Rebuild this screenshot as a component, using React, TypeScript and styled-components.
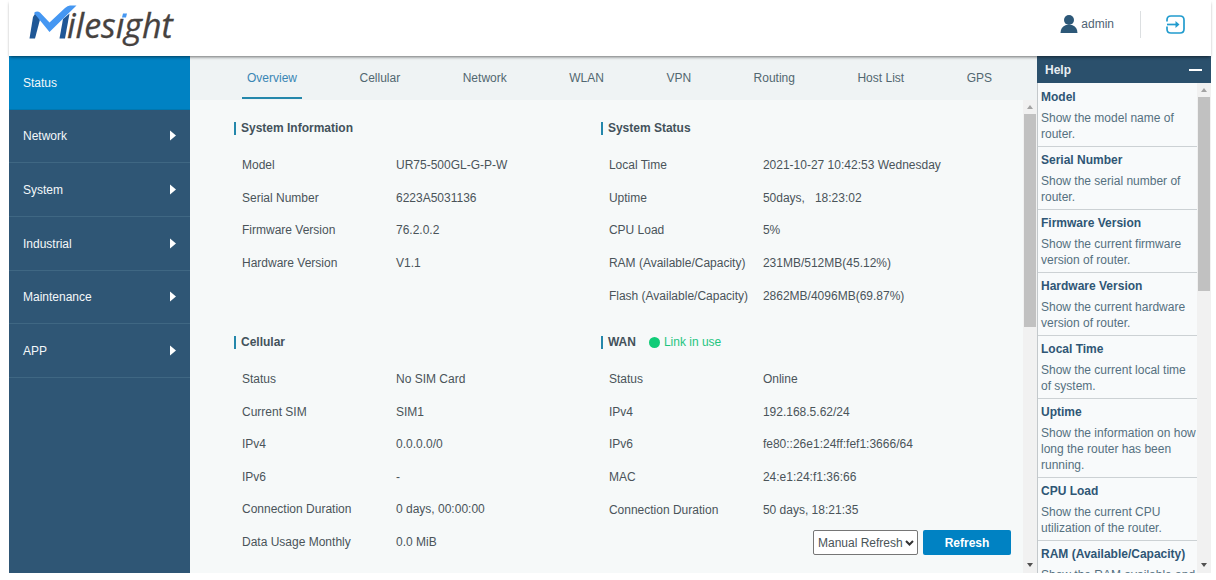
import React from "react";
import styled, { createGlobalStyle } from "styled-components";

const GlobalStyle = createGlobalStyle`
  * { box-sizing: border-box; }
  body {
    margin: 0;
    background: #fff;
    color: #4a5459;
    font: 12px/16px "Liberation Sans", Arial, sans-serif;
  }
  h2, h3, p, dl, dd, ul { margin: 0; padding: 0; }
  ul { list-style: none; }
  a { color: inherit; text-decoration: none; }
`;

const Page = styled.div`
  height: 100vh;
  min-height: 480px;
  display: flex;
  flex-direction: column;
  padding: 0 5px 7px 9px;
`;

const Header = styled.header`
  position: relative;
  z-index: 1;
  flex: none;
  height: 56px;
  display: flex;
  align-items: center;
  justify-content: space-between;
  padding: 0 26px 8px 19px;
  background: #fff;
  box-shadow: 0 2px 3px -1px rgba(0, 0, 0, 0.55);
`;

const Logo = styled.svg`
  display: block;
  width: 150px;
  height: 48px;
`;

const Account = styled.div`
  display: flex;
  align-items: center;
`;

const User = styled.a`
  display: flex;
  align-items: center;
  gap: 3px;
  color: #4f6373;
`;

const Divider = styled.span`
  width: 1px;
  height: 27px;
  margin: 0 25px 0 26px;
  background: #dcdfe1;
`;

const IconButton = styled.button`
  display: flex;
  padding: 0;
  border: 0;
  background: none;
  cursor: pointer;
`;

const Body = styled.div`
  flex: 1;
  min-height: 0;
  display: flex;
`;

const Sidebar = styled.nav`
  flex: none;
  width: 181px;
  background: #2f5675;
`;

const Menu = styled.ul`
  display: grid;
  grid-auto-rows: 1fr;
  height: 322px;
`;

const MenuLink = styled.a<{ $active?: boolean }>`
  height: 100%;
  display: flex;
  align-items: center;
  justify-content: space-between;
  padding: 1px 13px 0 14px;
  border-bottom: 1px solid ${(p) => (p.$active ? "#0077b0" : "#3f6783")};
  background: ${(p) => (p.$active ? "#0082c3" : "transparent")};
  color: #f4f8fa;
`;

const Main = styled.main`
  flex: 1;
  min-width: 0;
  display: flex;
  flex-direction: column;
  background: #f6f9f9;
`;

const Tabs = styled.nav`
  flex: none;
  height: 44px;
  display: flex;
  justify-content: space-between;
  padding: 0 40px 0 52px;
  background: #eff3f4;
`;

const Tab = styled.a<{ $active?: boolean }>`
  height: 43px;
  padding: 14px 5px 0;
  border-bottom: 2px solid ${(p) => (p.$active ? "#2487ab" : "transparent")};
  color: ${(p) => (p.$active ? "#3a86b4" : "#526770")};
  white-space: nowrap;
`;

const ScrollArea = styled.div`
  flex: 1;
  min-height: 0;
  display: flex;
`;

const Content = styled.div`
  flex: 1;
  min-width: 0;
  overflow: hidden;
  display: grid;
  grid-template-columns: 17fr 19fr;
  align-content: start;
  row-gap: 20px;
  padding: 18px 12px 0 44px;
`;

const SectionTitle = styled.h2`
  height: 20px;
  display: flex;
  align-items: center;
  margin-bottom: 11px;
  font-size: 12px;
  color: #43525b;

  &::before {
    content: "";
    width: 2px;
    height: 13px;
    margin-right: 5px;
    background: #2487ab;
  }
`;

const LinkState = styled.span`
  display: flex;
  align-items: center;
  gap: 4px;
  margin-left: 13px;
  font-weight: normal;
  color: #1fc57f;

  &::before {
    content: "";
    width: 11px;
    height: 11px;
    border-radius: 50%;
    background: #10cc78;
  }
`;

const Facts = styled.dl<{ $height: number }>`
  height: ${(p) => p.$height}px;
  display: grid;
  grid-auto-rows: 1fr;
  padding-left: 8px;
`;

const Fact = styled.div`
  display: grid;
  grid-template-columns: 154px 1fr;
  align-items: center;
  white-space: pre;
`;

const Actions = styled.div`
  display: flex;
  justify-content: flex-end;
  gap: 5px;
  margin-top: 4px;
`;

const SelectBox = styled.div`
  display: grid;
  grid-template-columns: 105px;
  align-items: center;

  > * { grid-area: 1 / 1; }

  svg {
    justify-self: end;
    margin-right: 4px;
    pointer-events: none;
  }
`;

const Select = styled.select`
  appearance: none;
  height: 25px;
  padding: 0 0 0 4px;
  border: 1px solid #767676;
  border-radius: 2px;
  background: #fff;
  color: #4a5459;
  font: inherit;
`;

const PrimaryButton = styled.button`
  width: 88px;
  height: 25px;
  padding: 0;
  border: 0;
  border-radius: 2px;
  background: #0082c3;
  color: #fff;
  font: inherit;
  font-weight: bold;
`;

const Help = styled.aside`
  flex: none;
  width: 174px;
  display: flex;
  flex-direction: column;
`;

const HelpHeader = styled.div`
  flex: none;
  height: 27px;
  display: flex;
  align-items: center;
  justify-content: space-between;
  padding: 0 9px 0 8px;
  background: #2b506c;
  color: #e8eef2;

  h2 { font-size: 12px; }
`;

const HelpBody = styled(ScrollArea)`
  border-left: 1px solid #c3c8cb;
  background: #f8fafb;
`;

const HelpList = styled.div`
  flex: 1;
  min-width: 0;
  overflow: hidden;
  padding-top: 1px;
`;

const HelpItem = styled.section`
  padding: 5px 0 4px 3px;
  border-bottom: 1px solid #ccd1d4;
  color: #557080;

  h3 {
    margin-bottom: 5px;
    font-size: 12px;
    line-height: 16px;
    color: #2f5675;
    white-space: nowrap;
  }
`;

const Track = styled.div`
  flex: none;
  width: 14px;
  display: flex;
  flex-direction: column;
  align-items: center;
  justify-content: space-between;
  padding: 5px 1px 6px;
  background: #f1f1f1;
`;

const Rail = styled.div`
  flex: 1;
  margin: 5px 0;
`;

const Thumb = styled.div<{ $size: number }>`
  width: 12px;
  height: ${(p) => p.$size}%;
  background: #c1c1c1;
`;

const Arrow = styled.i<{ $down?: boolean }>`
  border: 3px solid transparent;
  border-${(p) => (p.$down ? "top" : "bottom")}: 4px solid ${(p) => (p.$down ? "#505050" : "#a3a3a3")};
  border-${(p) => (p.$down ? "bottom" : "top")}: 0;
`;

function Scrollbar({ size }: { size: number }) {
  return (
    <Track aria-hidden="true">
      <Arrow />
      <Rail>
        <Thumb $size={size} />
      </Rail>
      <Arrow $down />
    </Track>
  );
}

const menu = ["Status", "Network", "System", "Industrial", "Maintenance", "APP"];
const tabs = ["Overview", "Cellular", "Network", "WLAN", "VPN", "Routing", "Host List", "GPS"];

type Section = { title: string; height: number; linked?: boolean; facts: [string, string][] };

const sections: Section[] = [
  {
    title: "System Information",
    height: 130,
    facts: [
      ["Model", "UR75-500GL-G-P-W"],
      ["Serial Number", "6223A5031136"],
      ["Firmware Version", "76.2.0.2"],
      ["Hardware Version", "V1.1"],
    ],
  },
  {
    title: "System Status",
    height: 163,
    facts: [
      ["Local Time", "2021-10-27 10:42:53 Wednesday"],
      ["Uptime", "50days,   18:23:02"],
      ["CPU Load", "5%"],
      ["RAM (Available/Capacity)", "231MB/512MB(45.12%)"],
      ["Flash (Available/Capacity)", "2862MB/4096MB(69.87%)"],
    ],
  },
  {
    title: "Cellular",
    height: 195,
    facts: [
      ["Status", "No SIM Card"],
      ["Current SIM", "SIM1"],
      ["IPv4", "0.0.0.0/0"],
      ["IPv6", "-"],
      ["Connection Duration", "0 days, 00:00:00"],
      ["Data Usage Monthly", "0.0 MiB"],
    ],
  },
  {
    title: "WAN",
    height: 163,
    linked: true,
    facts: [
      ["Status", "Online"],
      ["IPv4", "192.168.5.62/24"],
      ["IPv6", "fe80::26e1:24ff:fef1:3666/64"],
      ["MAC", "24:e1:24:f1:36:66"],
      ["Connection Duration", "50 days, 18:21:35"],
    ],
  },
];

const help = [
  ["Model", "Show the model name of router."],
  ["Serial Number", "Show the serial number of router."],
  ["Firmware Version", "Show the current firmware version of router."],
  ["Hardware Version", "Show the current hardware version of router."],
  ["Local Time", "Show the current local time of system."],
  ["Uptime", "Show the information on how long the router has been running."],
  ["CPU Load", "Show the current CPU utilization of the router."],
  ["RAM (Available/Capacity)", "Show the RAM available and capacity of the router."],
];

export default function App() {
  return (
    <>
      <GlobalStyle />
      <Page>
        <Header>
          <Logo viewBox="0 0 150 48" role="img" aria-label="Milesight">
            <path d="M1.500 38.500L5 17L7.500 13L12 19.500L7 38.500Z" fill="#1f5796" />
            <path d="M31.500 38.500L35 19L41.500 13.500L37 38.500Z" fill="#1f5796" />
            <path d="M6 13Q9 10.500 12 12.500L21.500 22.500L37 8Q39.500 5.500 42 5.500H48.500L21.500 32Z" fill="#4597f2" />
            <text x="39" y="38" fontFamily="'Open Sans', sans-serif" fontStyle="italic" fontSize="34" fill="#46423f" stroke="#46423f" strokeWidth="0.3">
              ilesight
            </text>
            <rect x="93" y="10" width="9" height="7.500" fill="#fff" />
            <path d="M95 13.500h4l-1 4h-4z" fill="#4597f2" />
          </Logo>
          <Account>
            <User href="#account">
              <svg width="18" height="19" viewBox="0 0 18 19" fill="#2d5878" aria-hidden="true">
                <circle cx="9" cy="5" r="5" />
                <path d="M6 10h6q5.500 2 5.500 8H.5q0-6 5.500-8z" />
              </svg>
              admin
            </User>
            <Divider />
            <IconButton aria-label="Log out">
              <svg width="19" height="19" viewBox="0 0 19 19" fill="none" stroke="#229cce" strokeWidth="1.700" aria-hidden="true">
                <path d="M1 6.500V5Q1 1 5 1h9q4 0 4 4v9q0 4-4 4H5q-4 0-4-4v-2.500" />
                <path d="M1 9.500h11" />
                <path d="M9.500 6l4 3.500-4 3.500z" fill="#229cce" stroke="none" />
              </svg>
            </IconButton>
          </Account>
        </Header>
        <Body>
          <Sidebar>
            <Menu>
              {menu.map((name, i) => (
                <li key={name}>
                  <MenuLink href="#menu" $active={i === 0}>
                    {name}
                    {i > 0 && (
                      <svg width="7" height="12" viewBox="0 0 7 12" fill="#fff" aria-hidden="true">
                        <path d="M0 .5l6 5-6 5z" />
                      </svg>
                    )}
                  </MenuLink>
                </li>
              ))}
            </Menu>
          </Sidebar>
          <Main>
            <Tabs>
              {tabs.map((name, i) => (
                <Tab key={name} href="#tab" $active={i === 0}>
                  {name}
                </Tab>
              ))}
            </Tabs>
            <ScrollArea>
              <Content>
                {sections.map((s) => (
                  <section key={s.title}>
                    <SectionTitle>
                      {s.title}
                      {s.linked && <LinkState>Link in use</LinkState>}
                    </SectionTitle>
                    <Facts $height={s.height}>
                      {s.facts.map(([label, value]) => (
                        <Fact key={label}>
                          <dt>{label}</dt>
                          <dd>{value}</dd>
                        </Fact>
                      ))}
                    </Facts>
                    {s.linked && (
                      <Actions>
                        <SelectBox>
                          <Select aria-label="Refresh interval">
                            <option>Manual Refresh</option>
                          </Select>
                          <svg width="9" height="6" viewBox="0 0 9 6" fill="none" stroke="#333" strokeWidth="2" aria-hidden="true">
                            <path d="M1 1l3.500 3.500L8 1" />
                          </svg>
                        </SelectBox>
                        <PrimaryButton>Refresh</PrimaryButton>
                      </Actions>
                    )}
                  </section>
                ))}
              </Content>
              <Scrollbar size={48} />
            </ScrollArea>
          </Main>
          <Help>
            <HelpHeader>
              <h2>Help</h2>
              <IconButton aria-label="Collapse help">
                <svg width="13" height="2" aria-hidden="true">
                  <rect width="13" height="2" fill="#fff" />
                </svg>
              </IconButton>
            </HelpHeader>
            <HelpBody>
              <HelpList>
                {help.map(([title, text]) => (
                  <HelpItem key={title}>
                    <h3>{title}</h3>
                    <p>{text}</p>
                  </HelpItem>
                ))}
              </HelpList>
              <Scrollbar size={42} />
            </HelpBody>
          </Help>
        </Body>
      </Page>
    </>
  );
}
